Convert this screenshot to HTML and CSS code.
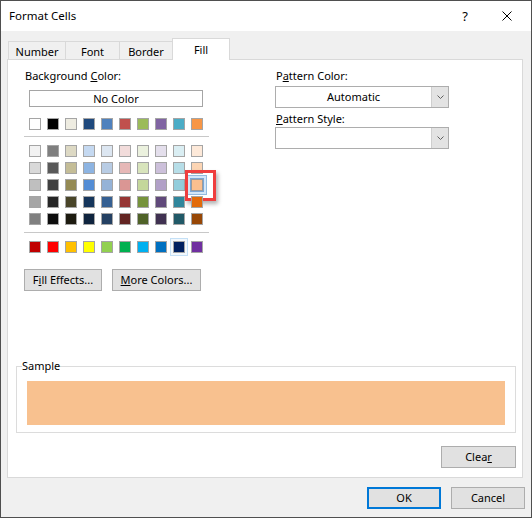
FILE: index.html
```html
<!DOCTYPE html>
<html lang="en">

<head>
    <meta charset="UTF-8">
    <title>Format Cells</title>
    <link rel="stylesheet" href="styles.css">
</head>

<body>
    <div class="window">
        <div class="titlebar">
            <span class="title">Format Cells</span>
            <div class="caption-buttons">
                <span class="help">?</span>
                <svg class="close" width="10" height="10" viewBox="0 0 10 10">
                    <path d="M0.5 0.5 L9.5 9.5 M9.5 0.5 L0.5 9.5" stroke="#000" stroke-width="1" fill="none" />
                </svg>
            </div>
        </div>

        <div class="client">
            <div class="tabs">
                <div class="tab tab-number">Number</div>
                <div class="tab tab-font">Font</div>
                <div class="tab tab-border">Border</div>
                <div class="tab tab-fill active">Fill</div>
            </div>

            <div class="panel">
                <div class="top">
                    <div class="bg-col">
                        <div class="label">Background <u>C</u>olor:</div>
                        <div class="no-color">No Color</div>
                        <div class="swatches" id="themeColors"></div>
                        <div class="sep"></div>
                        <div class="swatches" id="tintColors"></div>
                        <div class="sep sep-2"></div>
                        <div class="swatches" id="standardColors"></div>
                        <div class="btn-row">
                            <button class="btn btn-effects">F<u>i</u>ll Effects...</button>
                            <button class="btn btn-more"><u>M</u>ore Colors...</button>
                        </div>
                    </div>

                    <div class="pattern-col">
                        <div class="label">P<u>a</u>ttern Color:</div>
                        <div class="combo">
                            <span class="combo-value">Automatic</span>
                            <span class="combo-arrow">
                                <svg width="7" height="4" viewBox="0 0 7 4">
                                    <polyline points="0.5,0.5 3.5,3.5 6.5,0.5" stroke="#606060" fill="none" />
                                </svg>
                            </span>
                        </div>
                        <div class="label label-style"><u>P</u>attern Style:</div>
                        <div class="combo">
                            <span class="combo-value"></span>
                            <span class="combo-arrow">
                                <svg width="7" height="4" viewBox="0 0 7 4">
                                    <polyline points="0.5,0.5 3.5,3.5 6.5,0.5" stroke="#606060" fill="none" />
                                </svg>
                            </span>
                        </div>
                    </div>
                </div>

                <fieldset class="sample">
                    <legend>Sample</legend>
                    <div class="sample-fill"></div>
                </fieldset>

                <div class="clear-row">
                    <button class="btn btn-clear">Clea<u>r</u></button>
                </div>
            </div>

            <div class="dialog-buttons">
                <button class="btn btn-dialog default">OK</button>
                <button class="btn btn-dialog">Cancel</button>
            </div>
        </div>
    </div>

    <script>
        const THEME = ['#FFFFFF', '#000000', '#EEECE1', '#1F497D', '#4F81BD', '#C0504D', '#9BBB59', '#8064A2', '#4BACC6', '#F79646'];

        const TINTS = [
            ['#F2F2F2', '#7F7F7F', '#DDD9C4', '#C5D9F1', '#DCE6F1', '#F2DCDB', '#EBF1DE', '#E4DFEC', '#DAEEF3', '#FDE9D9'],
            ['#D9D9D9', '#595959', '#C4BD97', '#8DB4E2', '#B8CCE4', '#E6B8B7', '#D8E4BC', '#CCC0DA', '#B7DEE8', '#FCD5B4'],
            ['#BFBFBF', '#404040', '#948A54', '#538DD5', '#95B3D7', '#DA9694', '#C4D79B', '#B1A0C7', '#92CDDC', '#FABF8F'],
            ['#A6A6A6', '#262626', '#494529', '#16365C', '#366092', '#963634', '#76933C', '#60497A', '#31869B', '#E26B0A'],
            ['#808080', '#0D0D0D', '#1D1B10', '#0F243E', '#244062', '#632523', '#4F6228', '#403151', '#215967', '#974706']
        ];

        const STANDARD = ['#C00000', '#FF0000', '#FFC000', '#FFFF00', '#92D050', '#00B050', '#00B0F0', '#0070C0', '#002060', '#7030A0'];

        function fillSwatches(id, colors) {
            const box = document.getElementById(id);
            colors.forEach(color => {
                const sw = document.createElement('div');
                sw.className = 'swatch';
                sw.style.background = color;
                box.appendChild(sw);
            });
            return box.children;
        }

        fillSwatches('themeColors', THEME);
        const tints = fillSwatches('tintColors', TINTS.flat());
        const standard = fillSwatches('standardColors', STANDARD);

        // selected: Orange, Accent 6, Lighter 40%
        tints[29].classList.add('selected');
        standard[8].classList.add('hover');
    </script>
</body>

</html>
```

FILE: styles.css
```css
* {
    box-sizing: border-box;
}

html,
body {
    margin: 0;
    padding: 0;
}

body {
    font-family: "Noto Sans", "Liberation Sans", Arial, sans-serif;
    font-size: 11px;
    line-height: 16px;
    color: #000;
    background: #f0f0f0;
}

.window {
    width: 532px;
    height: 518px;
    border: 1px solid #4f4f4f;
    background: #f0f0f0;
    display: flex;
    flex-direction: column;
}

.titlebar {
    height: 30px;
    background: #fff;
    display: flex;
    align-items: center;
    justify-content: space-between;
    padding: 0 19px 0 8px;
}

.title {
    font-size: 11.5px;
}

.caption-buttons {
    display: flex;
    align-items: center;
    gap: 34px;
}

.help {
    font-size: 13px;
    line-height: 16px;
}

.close {
    display: block;
}

.client {
    flex: 1;
    padding: 7px 0 0 6px;
}

/* tabs */
.tabs {
    display: flex;
    align-items: flex-end;
    height: 22px;
    margin-left: 1px;
    margin-bottom: -1px;
    position: relative;
    z-index: 1;
}

.tab {
    height: 18px;
    margin-bottom: 1px;
    border: 1px solid #d9d9d9;
    border-bottom: none;
    padding-top: 2px;
    text-align: center;
    background: #f0f0f0;
}

.tab + .tab {
    margin-left: -1px;
}

.tab-number {
    width: 58px;
}

.tab-font {
    width: 55px;
}

.tab-border {
    width: 54px;
}

.tab-fill {
    width: 58px;
}

.tab.active {
    height: 22px;
    margin-bottom: 0;
    padding-top: 3px;
    background: #fff;
}

/* fill page */
.panel {
    width: 516px;
    height: 419px;
    background: #fff;
    border: 1px solid #d9d9d9;
    padding-top: 8px;
    display: flex;
    flex-direction: column;
}

.top {
    display: flex;
}

.bg-col {
    width: 185px;
    margin-left: 16px;
}

.label {
    padding-left: 1px;
}

.no-color {
    width: 174px;
    height: 17px;
    margin: 6px 0 0 5px;
    border: 1px solid #a5a5a5;
    text-align: center;
    line-height: 15px;
}

.swatches {
    display: grid;
    grid-template-columns: repeat(10, 12px);
    column-gap: 6px;
    row-gap: 5px;
    margin-left: 5px;
}

#themeColors {
    margin-top: 11px;
}

.swatch {
    width: 12px;
    height: 12px;
    border: 1px solid #a5a5a5;
    position: relative;
}

.swatch.hover {
    box-shadow: 0 0 0 2px #f2f8fd, 0 0 0 3px #c4e0f6;
}

.swatch.selected {
    border-color: #9a9a9a;
    box-shadow: 0 0 0 1px #7ba6d6, 0 0 0 3px #d3e6f7, 0 0 0 4px #92badf;
}

/* annotation box around the picked colour */
.swatch.selected::after {
    content: "";
    position: absolute;
    left: -7px;
    top: -10px;
    width: 25px;
    height: 25px;
    border: 3px solid #ef3e3e;
    box-shadow: 2px 3px 4px rgba(0, 0, 0, 0.3);
}

.sep {
    height: 1px;
    background: #c8c8c8;
    margin: 6px 0 8px 0;
}

.sep-2 {
    margin: 7px 0 8px 0;
}

.btn {
    font: inherit;
    color: #000;
    background: #e1e1e1;
    border: 1px solid #adadad;
    height: 22px;
    padding: 0;
    line-height: 18px;
}

.btn-row {
    display: flex;
    gap: 10px;
    margin-top: 16px;
}

.btn-effects {
    width: 78px;
}

.btn-more {
    width: 89px;
}

.pattern-col {
    width: 174px;
    margin-left: 66px;
}

.label-style {
    margin-top: 3px;
}

.combo {
    height: 22px;
    margin-top: 2px;
    border: 1px solid #adadad;
    display: flex;
    background: #fff;
}

.label-style + .combo {
    margin-top: 0;
}

.combo-value {
    flex: 1;
    text-align: center;
    line-height: 20px;
}

.combo-arrow {
    width: 17px;
    background: #e3e3e3;
    border-left: 1px solid #cfcfcf;
    display: flex;
    align-items: center;
    justify-content: center;
}

.combo-arrow svg {
    display: block;
}

/* sample */
.sample {
    width: 500px;
    margin: 67px 0 0 8px;
    padding: 0 10px 7px 10px;
    border: 1px solid #dcdcdc;
    min-width: 0;
}

.sample legend {
    padding: 0;
    margin-left: -5px;
    line-height: 16px;
}

.sample-fill {
    height: 44px;
    margin-top: 7px;
    background: #f8c18f;
}

.clear-row {
    display: flex;
    justify-content: flex-end;
    padding-right: 6px;
    margin-top: 13px;
}

.btn-clear {
    width: 75px;
}

/* OK / Cancel */
.dialog-buttons {
    display: flex;
    justify-content: flex-end;
    gap: 10px;
    padding-right: 6px;
    margin-top: 9px;
}

.btn-dialog {
    width: 74px;
}

.btn-dialog.default {
    border: 2px solid #0078d7;
    line-height: 16px;
}
```
